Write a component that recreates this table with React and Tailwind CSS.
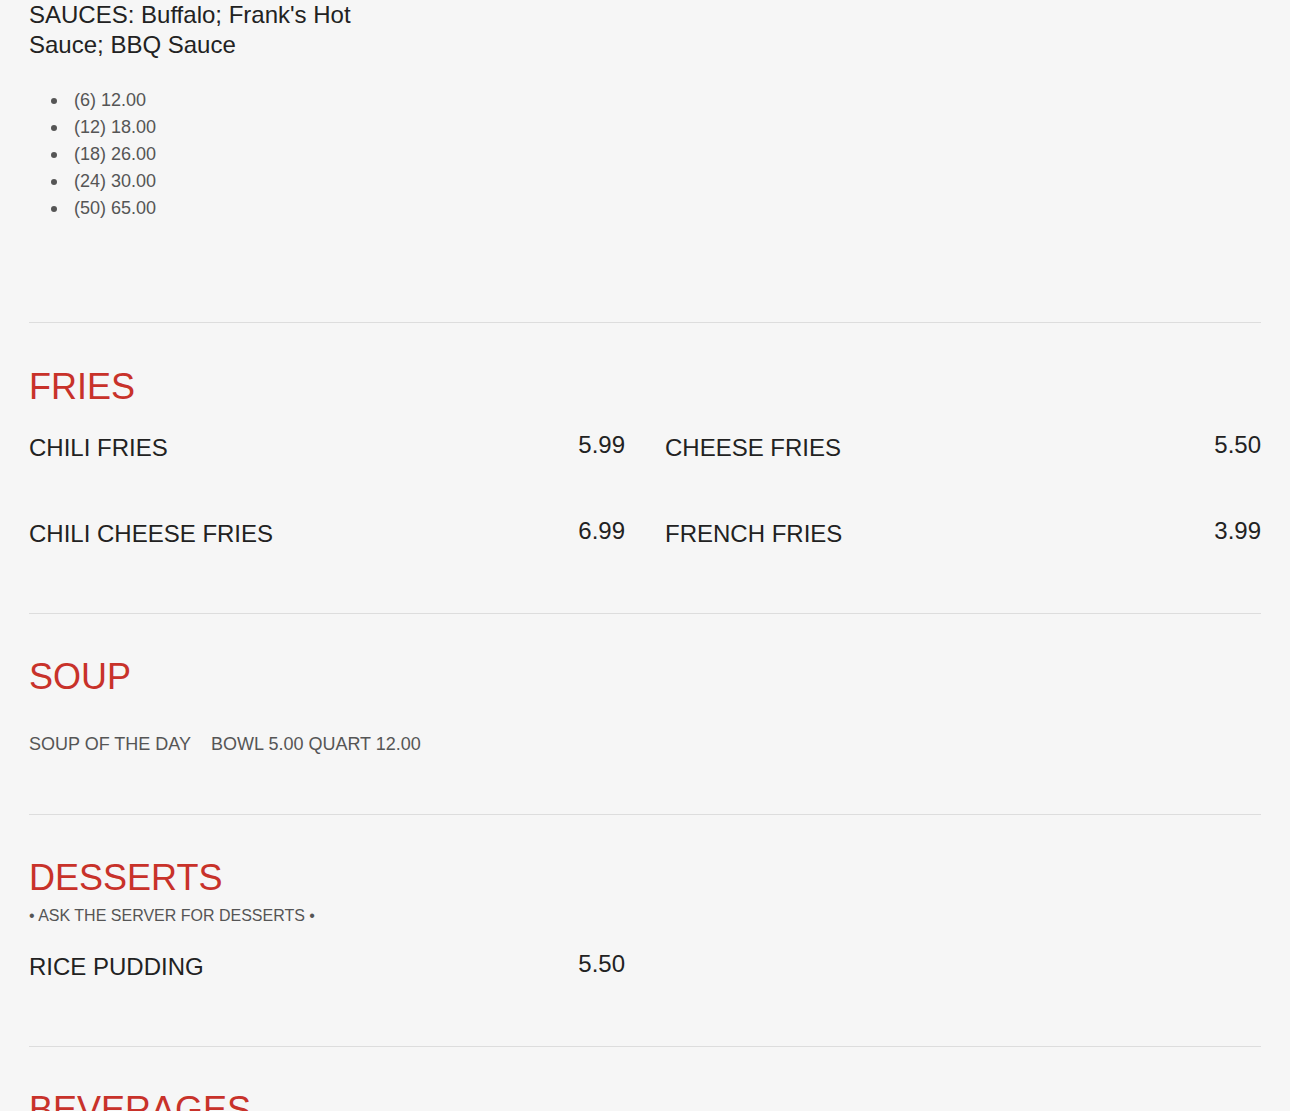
export default function App() {
  const font = { fontFamily: '"Liberation Sans", Arial, sans-serif' };
  const Item = ({ name, price }) => (
    <div className="flex items-start justify-between">
      <div className="text-[24px] leading-[30px] text-[#222]">{name}</div>
      <div className="text-[24px] leading-[24px] text-[#222]">{price}</div>
    </div>
  );
  const prices = ["(6) 12.00", "(12) 18.00", "(18) 26.00", "(24) 30.00", "(50) 65.00"];
  return (
    <div className="min-h-[1111px] bg-[#f6f6f6] overflow-hidden" style={font}>
      <div className="mx-[29px] h-[1111px] overflow-hidden">
        <div className="pb-[100px]">
          <p className="text-[24px] leading-[30px] text-[#222] w-[340px]">
            SAUCES: Buffalo; Frank's Hot Sauce; BBQ Sauce
          </p>
          <ul className="pl-[22px] mt-[27px] text-[18px] leading-[27px] text-[#555]">
            {prices.map((p) => (
              <li key={p} className="flex items-center">
                <span className="w-[6px] h-[6px] rounded-full bg-[#555] mr-[17px] shrink-0"></span>
                <span>{p}</span>
              </li>
            ))}
          </ul>
        </div>

        <section className="border-t border-[#dddddd] pt-[44px] pb-[64px]">
          <h2 className="text-[36px] leading-[40px] text-[#c8322a]">FRIES</h2>
          <div className="grid grid-cols-2 gap-x-[40px] gap-y-[56px] mt-[26px]">
            <Item name="CHILI FRIES" price="5.99" />
            <Item name="CHEESE FRIES" price="5.50" />
            <Item name="CHILI CHEESE FRIES" price="6.99" />
            <Item name="FRENCH FRIES" price="3.99" />
          </div>
        </section>

        <section className="border-t border-[#dddddd] pt-[43px] pb-[56px]">
          <h2 className="text-[36px] leading-[40px] text-[#c8322a]">SOUP</h2>
          <div className="mt-[34px] flex gap-[20px] text-[18px] leading-[27px] text-[#555]">
            <span>SOUP OF THE DAY</span>
            <span>BOWL 5.00 QUART 12.00</span>
          </div>
        </section>

        <section className="border-t border-[#dddddd] pt-[43px] pb-[64px]">
          <h2 className="text-[36px] leading-[40px] text-[#c8322a]">DESSERTS</h2>
          <p className="mt-[6px] text-[16px] leading-[24px] text-[#555]">• ASK THE SERVER FOR DESSERTS •</p>
          <div className="grid grid-cols-2 gap-x-[40px] mt-[24px]">
            <Item name="RICE PUDDING" price="5.50" />
          </div>
        </section>

        <section className="border-t border-[#dddddd] pt-[43px]">
          <h2 className="text-[36px] leading-[40px] text-[#c8322a]">BEVERAGES</h2>
        </section>
      </div>
    </div>
  );
}
